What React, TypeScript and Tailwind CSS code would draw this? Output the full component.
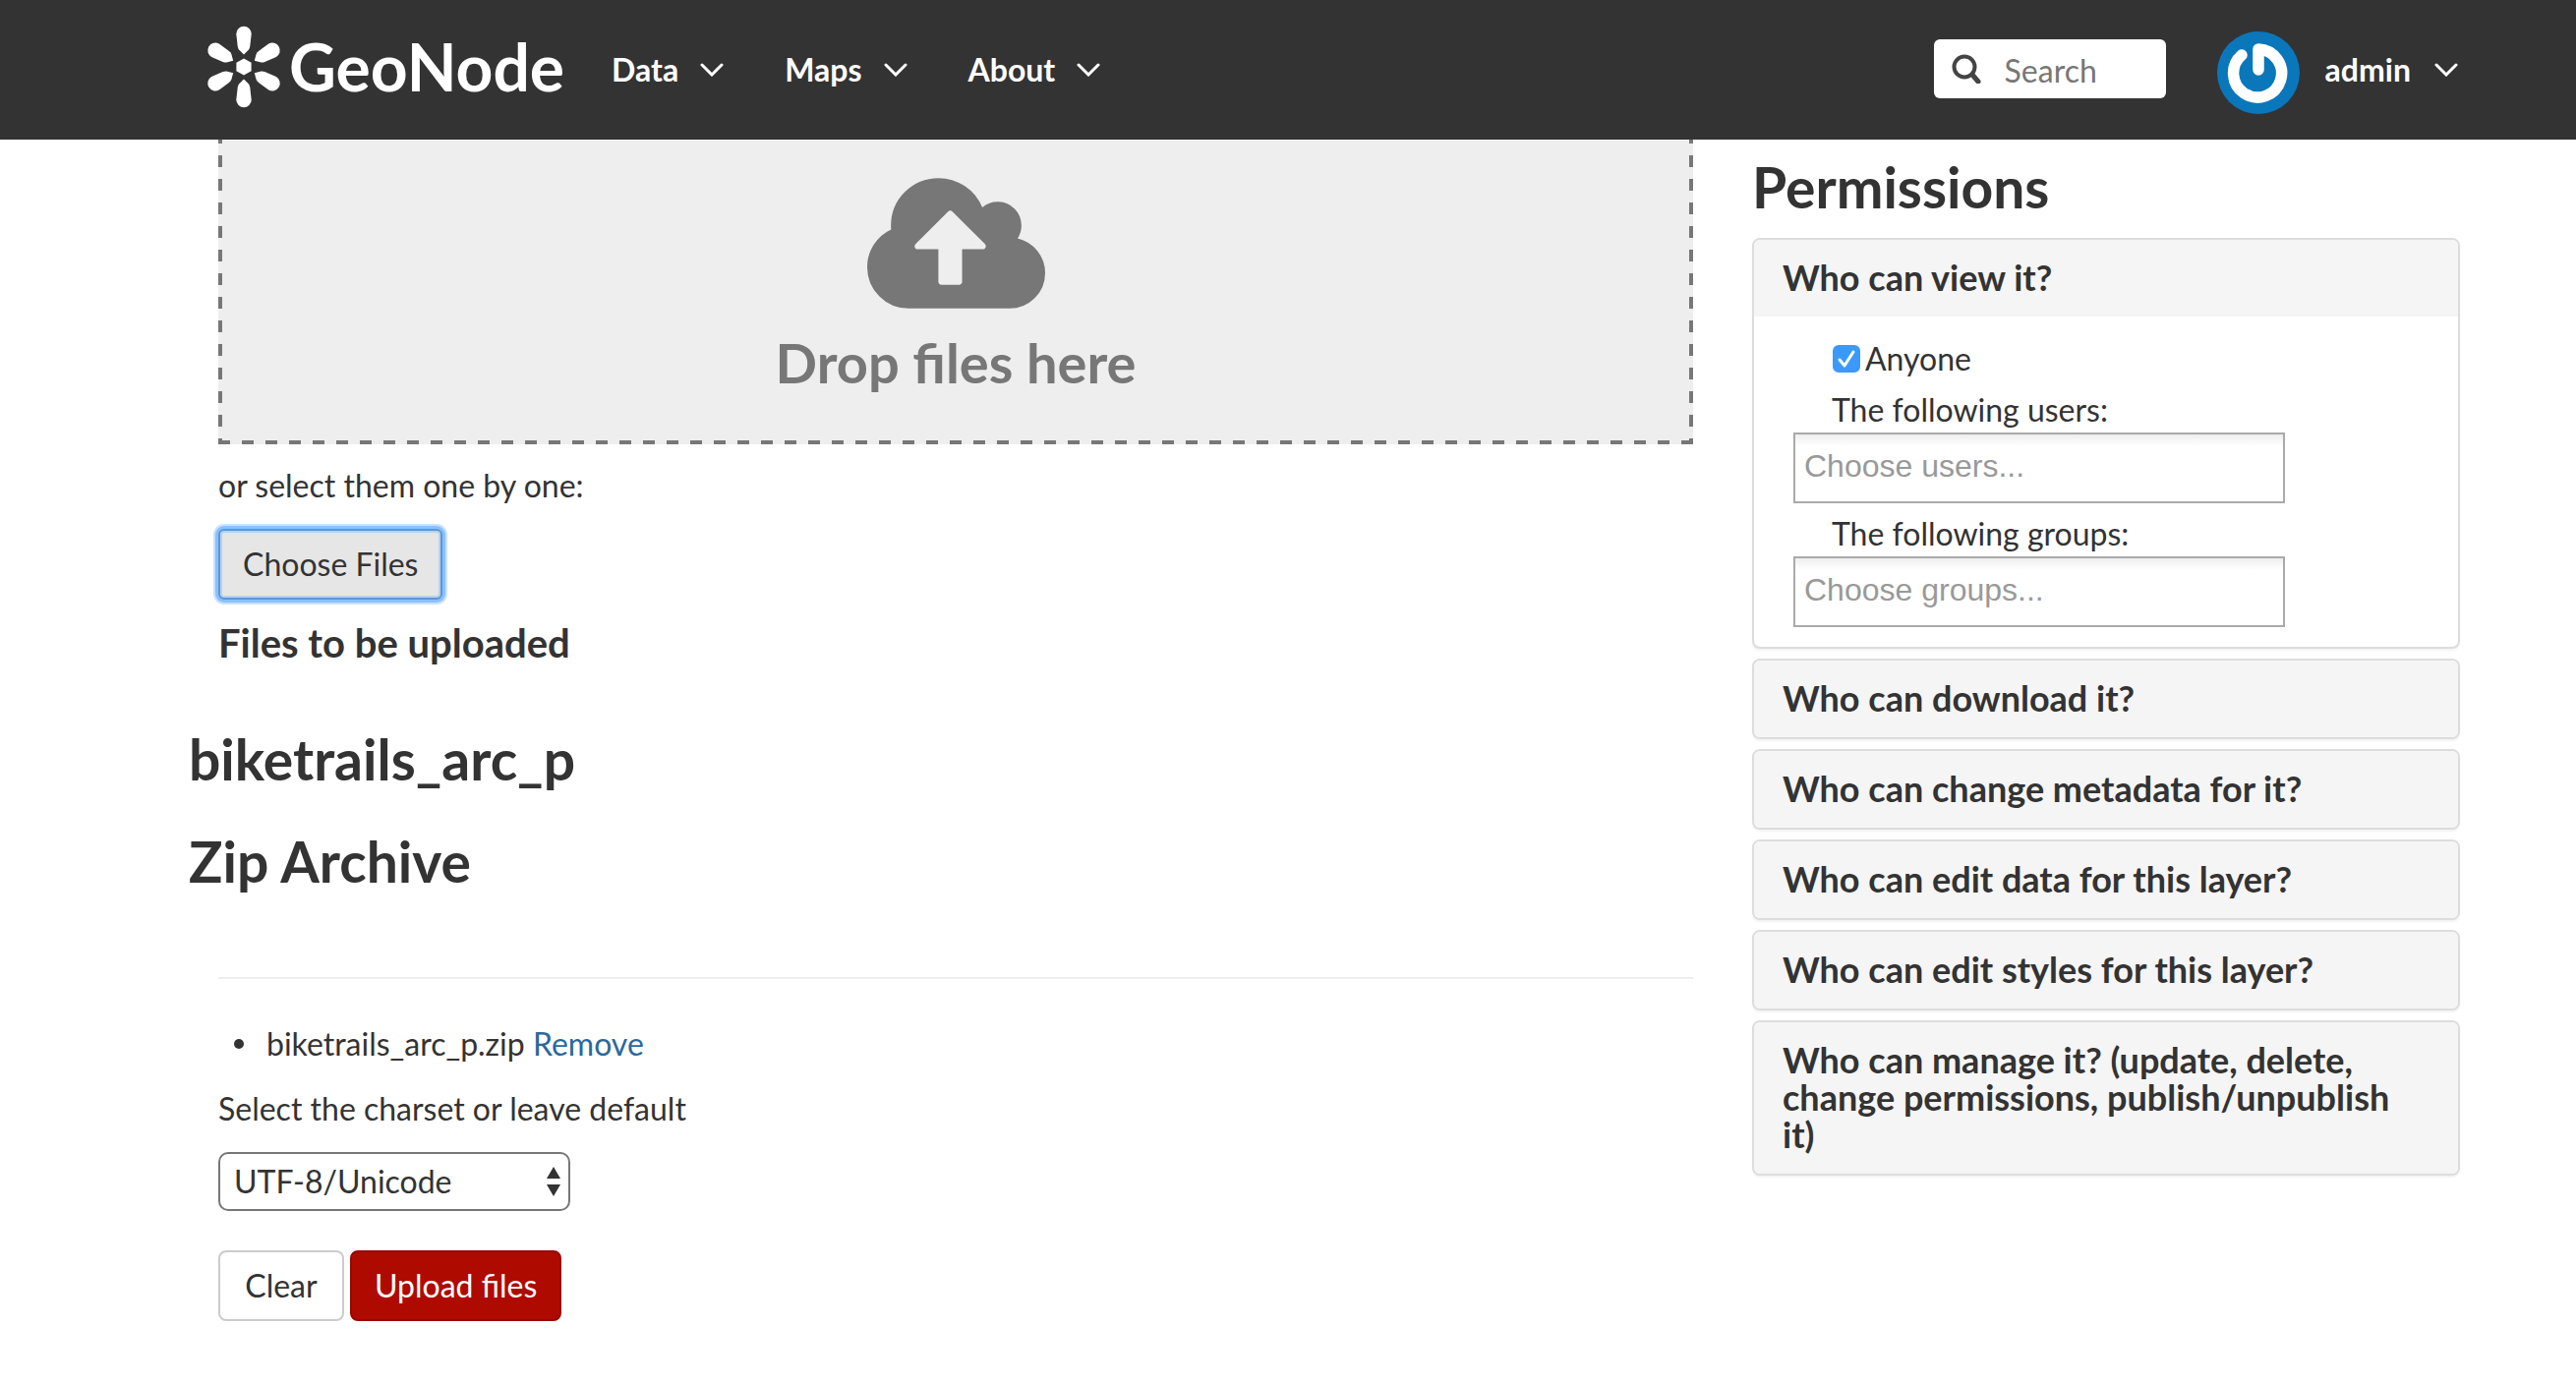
import React from "react";

function LogoMark() {
  return (
    <svg viewBox="-38 -41 76 82" className="h-[82px] w-[76px] overflow-visible fill-white" aria-hidden="true">
      {[0, 60, 120, 180, 240, 300].map((angle) => (
        <path
          key={angle}
          transform={`rotate(${angle})`}
          d="M0 -12.500 L5 -17.500 Q6 -19 6.300 -21 L7.700 -33.500 A7.700 7.700 0 1 0 -7.700 -33.500 L-6.300 -21 Q-6 -19 -5 -17.500 Z"
        />
      ))}
      <path d="M0 -8.600 L7.600 -4.300 V4.300 L0 8.600 L-7.600 4.300 V-4.300 Z" />
    </svg>
  );
}

function Chevron() {
  return (
    <svg viewBox="0 0 24 14" className="h-[14px] w-6" fill="none" stroke="white" strokeWidth="3" strokeLinecap="round" aria-hidden="true">
      <path d="M2 2 L12 12 L22 2" />
    </svg>
  );
}

function CloudUpload() {
  return (
    <svg viewBox="0 128 1920 1408" className="h-[133px] w-[181px] fill-[#777]" aria-hidden="true">
      <path d="M1280 864q0-14-9-23l-352-352q-9-9-23-9t-23 9l-351 351q-10 12-10 24 0 14 9 23t23 9h224v352q0 13 9.500 22.500t22.500 9.500h192q13 0 22.500-9.500t9.500-22.500v-352h224q13 0 22.500-9.500t9.500-22.500zm640 288q0 159-112.500 271.500t-271.500 112.500h-1088q-185 0-316.500-131.500t-131.500-316.500q0-130 70-240t188-165q-2-30-2-43 0-212 150-362t362-150q156 0 285.500 87t188.500 231q71-62 166-62 106 0 181 75t75 181q0 76-41 138 130 31 213.500 135.500t83.500 238.500z" />
    </svg>
  );
}

function Avatar() {
  return (
    <svg viewBox="0 0 84 84" className="mt-8 h-[84px] w-[84px]" aria-hidden="true">
      <circle cx="42" cy="42" r="42" fill="#0a77bb" />
      <path d="M25 24 A24.500 24.500 0 1 0 42 18 V39" fill="none" stroke="white" strokeWidth="11.500" strokeLinecap="round" strokeLinejoin="round" />
    </svg>
  );
}

function Header() {
  return (
    <header className="flex h-[142px] items-start bg-[#333] pr-[120px] pl-[210px] text-white">
      <a href="#home" className="mt-[27px] flex items-center gap-2">
        <LogoMark />
        <span className="text-[66px] leading-[80px] font-bold">GeoNode</span>
      </a>
      <nav className="mt-12 ml-12 flex items-center gap-[62px]">
        {["Data", "Maps", "About"].map((name) => (
          <button key={name} type="button" className="flex items-center gap-[22px] text-[32px] leading-[46px] font-bold">
            {name}
            <Chevron />
          </button>
        ))}
      </nav>
      <label className="mt-10 ml-auto flex h-[60px] w-[236px] items-center gap-6 rounded-md bg-white pl-[18px]">
        <svg viewBox="0 0 30 30" className="size-[30px] shrink-0" fill="none" stroke="#444" strokeLinecap="round" aria-hidden="true">
          <circle cx="13" cy="13" r="10.500" strokeWidth="4" />
          <path d="M21 21 L27 28" strokeWidth="5" />
        </svg>
        <input type="search" aria-label="Search" placeholder="Search" className="w-full min-w-0 pt-[3px] text-[32px] leading-[46px] text-[#333] outline-none placeholder:text-[#777]" />
      </label>
      <button type="button" className="ml-[52px] flex items-start gap-[26px] text-[32px] leading-[46px] font-bold">
        <Avatar />
        <span className="mt-12 flex items-center gap-6">
          admin
          <Chevron />
        </span>
      </button>
    </header>
  );
}

function Uploader() {
  return (
    <main className="flex flex-col items-start px-[30px]">
      <div className="flex h-[310px] w-full flex-col items-center bg-[#eee] bg-[repeating-linear-gradient(90deg,#777_0_12px,transparent_12px_24px),repeating-linear-gradient(0deg,#777_0_6px,transparent_6px_18px,#777_18px_24px),repeating-linear-gradient(0deg,#777_0_6px,transparent_6px_18px,#777_18px_24px)] bg-[size:100%_4px,4px_100%,4px_100%] bg-[position:bottom,left,right] bg-no-repeat pt-[39px]">
        <CloudUpload />
        <p className="mt-6 text-[56px] leading-[62px] font-bold text-[#777]">Drop files here</p>
      </div>
      <p className="mt-[19px]">or select them one by one:</p>
      <button type="button" className="mt-[21px] rounded-md border-2 border-[#5b96d8] bg-[#e6e6e6] px-[23px] py-[11px] shadow-[0_0_0_3px_#8ac0ff,0_0_0_5px_#c9e2ff,inset_0_0_0_2px_#b9d2ec]">
        Choose Files
      </button>
      <h4 className="mt-[22px] text-[40px] leading-[44px] font-bold">Files to be uploaded</h4>
      <h3 className="mt-[65px] -ml-[30px] text-[57px] leading-[62px] font-bold">biketrails_arc_p</h3>
      <h3 className="mt-[42px] -ml-[30px] text-[57px] leading-[62px] font-bold">Zip Archive</h3>
      <hr className="mt-[87px] w-full border-t-2 border-[#eee]" />
      <ul className="mt-[43px] pl-4">
        <li className="flex items-center gap-[23px] before:size-[10px] before:rounded-full before:bg-[#333]">
          <span>
            biketrails_arc_p.zip <a href="#remove" className="text-[#2c689c]">Remove</a>
          </span>
        </li>
      </ul>
      <label htmlFor="charset" className="mt-5">Select the charset or leave default</label>
      <div className="relative mt-[21px]">
        <select id="charset" className="h-[60px] w-[358px] appearance-none rounded-[10px] border-2 border-[#777] bg-white pl-[14px]">
          <option>UTF-8/Unicode</option>
        </select>
        <svg viewBox="0 0 14 30" className="pointer-events-none absolute top-[15px] right-[10px] h-[30px] w-[14px] fill-[#333]" aria-hidden="true">
          <path d="M7 0 L14 12 H0 Z M0 18 H14 L7 30 Z" />
        </svg>
      </div>
      <div className="mt-10 flex gap-[6px]">
        <button type="button" className="min-w-32 rounded-lg border-2 border-[#ccc] bg-white px-[23px] py-[11px]">Clear</button>
        <button type="button" className="rounded-lg border-2 border-[#970900] bg-[#af0a00] px-[23px] py-[11px] text-white">Upload files</button>
      </div>
    </main>
  );
}

function PanelTitle({ children }: { children: React.ReactNode }) {
  return (
    <h4>
      <button type="button" className="block w-full bg-[#f5f5f5] px-[29px] pt-[19px] pb-[21px] text-left text-[36px] leading-[38px] font-bold">
        {children}
      </button>
    </h4>
  );
}

function Panel({ title, children }: { title: string; children?: React.ReactNode }) {
  return (
    <section className="flex flex-col overflow-hidden rounded-lg border-2 border-[#ddd] bg-white shadow-[0_2px_2px_rgba(0,0,0,0.05)]">
      <PanelTitle>{title}</PanelTitle>
      {children}
    </section>
  );
}

function Chooser({ id, label, placeholder }: { id: string; label: string; placeholder: string }) {
  return (
    <div className="flex flex-col">
      <label htmlFor={id} className="pl-[39px]">{label}</label>
      <input
        id={id}
        type="text"
        placeholder={placeholder}
        className="h-[72px] w-[500px] border-2 border-[#aaa] bg-[linear-gradient(#eee,#fff_12px)] px-[9px] pb-[3px] font-['Liberation_Sans'] text-[32px] outline-none placeholder:text-[#999]"
      />
    </div>
  );
}

const closedPanels = [
  "Who can download it?",
  "Who can change metadata for it?",
  "Who can edit data for this layer?",
  "Who can edit styles for this layer?",
  "Who can manage it? (update, delete, change permissions, publish/unpublish it)",
];

function Permissions() {
  return (
    <aside className="px-[30px] pt-[17px]">
      <h2 className="text-[57px] leading-[62px] font-bold">Permissions</h2>
      <div className="mt-[21px] flex flex-col gap-[10px]">
        <Panel title="Who can view it?">
          <div className="flex flex-col px-10 py-5">
            <label className="mb-[6px] flex items-center gap-[5px] pl-10">
              <span className="grid size-7 *:col-start-1 *:row-start-1">
                <input type="checkbox" defaultChecked className="peer size-7 appearance-none rounded-md border-2 border-[#aaa] checked:border-[#3b99fc] checked:bg-[#3b99fc]" />
                <svg viewBox="0 0 28 28" className="pointer-events-none invisible size-7 peer-checked:visible" fill="none" stroke="white" strokeWidth="3" strokeLinecap="round" strokeLinejoin="round" aria-hidden="true">
                  <path d="M7 15 L12 21 L21 7" />
                </svg>
              </span>
              Anyone
            </label>
            <div className="flex flex-col gap-2">
              <Chooser id="users" label="The following users:" placeholder="Choose users..." />
              <Chooser id="groups" label="The following groups:" placeholder="Choose groups..." />
            </div>
          </div>
        </Panel>
        {closedPanels.map((title) => (
          <Panel key={title} title={title} />
        ))}
      </div>
    </aside>
  );
}

export default function App() {
  return (
    <div className="min-h-screen bg-white font-['Lato',sans-serif] text-[32px] leading-[46px] text-[#333]">
      <Header />
      <div className="grid grid-cols-[2fr_1fr] pr-[88px] pl-[192px]">
        <Uploader />
        <Permissions />
      </div>
    </div>
  );
}
